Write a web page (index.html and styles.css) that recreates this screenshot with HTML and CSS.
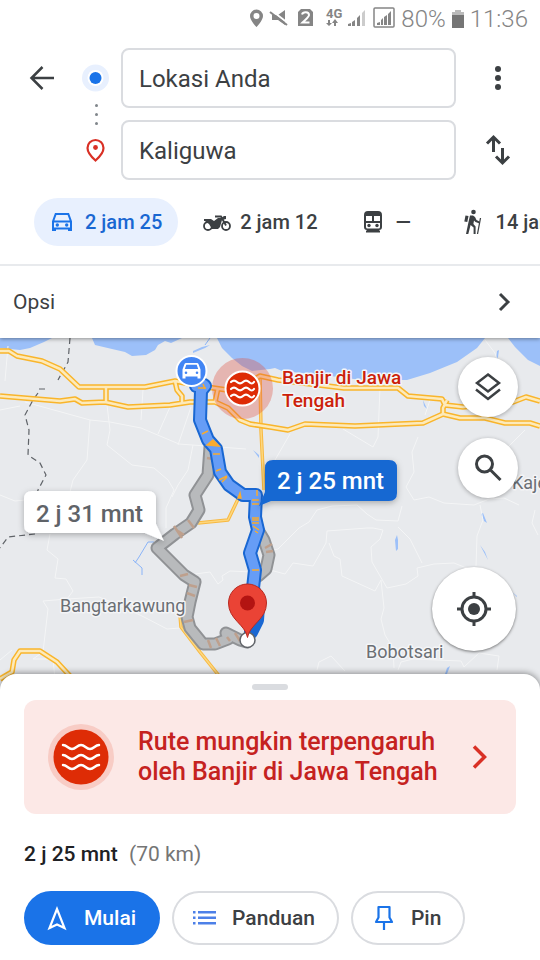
FILE: index.html
```html
<!DOCTYPE html>
<html lang="id">
<head>
<meta charset="utf-8">
<meta name="viewport" content="width=device-width, initial-scale=1">
<title>Rute ke Kaliguwa</title>
<link rel="stylesheet" href="styles.css">
</head>
<body>
<div class="status">
  <svg width="150" height="24" viewBox="247 7 150 24" fill="#858585" aria-hidden="true">
    <path fill-rule="evenodd" d="M257.500 9.500a6.500 6.500 0 0 0-6.500 6.500c0 4.500 6.500 11 6.500 11s6.500-6.500 6.500-11a6.500 6.500 0 0 0-6.500-6.500zm0 3.500a3 3 0 1 1 0 6 3 3 0 0 1 0-6z"/>
    <path d="M273 15h6l7-5v15l-7-5h-6z"/>
    <path d="M272 10l18 14" stroke="#fff" stroke-width="2"/>
    <path d="M271 12l17 13" stroke="#858585" stroke-width="2"/>
    <path d="M302 9h9l3 3v14h-15V12z"/>
    <path d="M303 14.500c1-3 7-3 7 .5 0 2-3 4-6.500 7.500h7" fill="none" stroke="#fff" stroke-width="2"/>
    <text class="net" x="327" y="18">4G</text>
    <path d="M329 20h2v3h2l-3 3-3-3h2zM337 26h-2v-3h-2l3-4 3 4h-2z"/>
    <path d="M349 26v-2l3-1v3zM353 26v-4l3-2v6zM358 26v-8l3-3v11z"/>
    <path d="M363 26V13l3-3v16z" fill="#ccc"/>
    <rect x="375" y="8" width="20" height="19" rx="1" fill="none" stroke="#858585" stroke-width="1.500"/>
    <path d="M378 25v-2l3-1v3zM382 25v-5l2-2v7zM385 25v-8l3-2v10zM389 25V14l3-3v14z"/>
  </svg>
  <span>80%</span>
  <svg width="14" height="20" viewBox="0 0 14 20" aria-hidden="true"><path d="M1 3h3V1h6v2h3v4H1z" fill="#bbb"/><path d="M1 6h12v13H1z" fill="#757575"/></svg>
  <span>11:36</span>
</div>

<header class="directions">
  <form class="route">
    <button class="icon-btn back" type="button" aria-label="Kembali">
      <svg width="28" height="28" viewBox="0 0 28 28" fill="none" stroke="#3c4043" stroke-width="2.500"><path d="M26 14H4M14.500 3L3.500 14l11 11"/></svg>
    </button>
    <svg class="waypoints" width="51" height="132" viewBox="0 0 51 132" aria-hidden="true">
      <circle cx="25.500" cy="30" r="13.500" fill="#e8f0fe"/><circle cx="25.500" cy="30" r="8" fill="#fff"/><circle cx="25.500" cy="30" r="6" fill="#1a73e8"/>
      <g fill="#80868b"><circle cx="26.500" cy="57.500" r="1.500"/><circle cx="26.500" cy="66.500" r="1.500"/><circle cx="26.500" cy="75.500" r="1.500"/></g>
      <path d="M25.500 92a8 8 0 0 0-8 8c0 5.500 8 12.500 8 12.500s8-7 8-12.500a8 8 0 0 0-8-8z" fill="none" stroke="#d93025" stroke-width="2.200"/><circle cx="25.500" cy="99.500" r="2.400" fill="#d93025"/>
    </svg>
    <input class="from" type="text" value="Lokasi Anda" aria-label="Titik awal">
    <button class="icon-btn more" type="button" aria-label="Opsi lainnya">
      <svg width="28" height="28" viewBox="0 0 28 28" fill="#3c4043"><circle cx="14" cy="5" r="3"/><circle cx="14" cy="14" r="3"/><circle cx="14" cy="23" r="3"/></svg>
    </button>
    <input class="to" type="text" value="Kaliguwa" aria-label="Tujuan">
    <button class="icon-btn swap" type="button" aria-label="Tukar titik awal dan tujuan">
      <svg width="30" height="32" viewBox="0 0 30 32" fill="none" stroke="#3c4043" stroke-width="3"><path d="M10.500 18V3.500M4 9.500l6.500-6.500 6.500 6.500M19.500 14v14.500M13 22.500l6.500 6.500 6.500-6.500"/></svg>
    </button>
  </form>
  <nav class="modes" aria-label="Mode perjalanan">
    <button class="mode active" type="button" aria-label="Mobil, 2 jam 25">
      <svg width="28" height="24" viewBox="0 0 28 24" fill="none" stroke="#1a73e8" stroke-width="2"><path d="M5 20.500v-9l2.700-7.500h12.600l2.700 7.500v9M5 11.500h18M5 18.500h18"/><path d="M4 18h4v3H4zM20 18h4v3h-4z" fill="#1a73e8" stroke="none"/><circle cx="9.300" cy="15" r="1.700" fill="#1a73e8" stroke="none"/><circle cx="18.700" cy="15" r="1.700" fill="#1a73e8" stroke="none"/></svg>
      <span>2 jam 25</span>
    </button>
    <button class="mode" type="button" aria-label="Sepeda motor, 2 jam 12">
      <svg width="28" height="24" viewBox="0 0 28 24" fill="none" stroke="#3c4043" stroke-width="1.800"><circle cx="5" cy="16" r="4"/><circle cx="23" cy="16" r="4"/><path d="M12 6.500h6l5 9"/><path d="M1 9h7l3 2 4-3h3l3-2h2v3l-4 1-2 7-2 2h-6l-3-5-4-3H1z" fill="#3c4043" stroke="none"/></svg>
      <span>2 jam 12</span>
    </button>
    <button class="mode" type="button" aria-label="Transportasi umum">
      <svg width="28" height="24" viewBox="0 0 28 24"><path fill="#3c4043" fill-rule="evenodd" d="M9 1h10q4 0 4 4v12q0 3-3 3l1 1v1.500H7V21l1-1q-3 0-3-3V5q0-4 4-4zM7 6v5h6V6zm8 0v5h6V6zM7 13v4q0 1.500 1.500 1.500h11q1.500 0 1.500-1.500v-4z"/><circle cx="10" cy="15.500" r="1.700" fill="#3c4043"/><circle cx="18" cy="15.500" r="1.700" fill="#3c4043"/></svg>
      <span>—</span>
    </button>
    <button class="mode" type="button" aria-label="Jalan kaki, 14 jam">
      <svg width="28" height="26" viewBox="0 0 28 26" fill="#3c4043"><circle cx="14.500" cy="3" r="2.300"/><path d="M11 6.500h3l2 1.500 1.500 3 3 1.500v2l-4-1.500-1.500-1.500-.6 3.500 2.200 2.500v7.500h-2v-6.500l-3-2.500-2.300 9H7L9.500 13z"/><path d="M6.500 6.500l3 .5-1.200 6-3-.6z"/><path d="M21.500 9L18.500 25" stroke="#3c4043" stroke-width="1.300"/></svg>
      <span>14 jam</span>
    </button>
  </nav>
  <button class="options" type="button">
    <span>Opsi</span>
    <svg width="14" height="20" viewBox="0 0 14 20" fill="none" stroke="#3c4043" stroke-width="3"><path d="M3 2l8 8-8 8"/></svg>
  </button>
</header>

<main class="map">
  <svg class="canvas" viewBox="0 338 540 352" preserveAspectRatio="xMidYMin slice" role="img" aria-label="Peta rute">
    <defs>
      <filter id="lift" x="-20%" y="-30%" width="140%" height="180%"><feDropShadow dx="0" dy="2" stdDeviation="3" flood-opacity=".28"/></filter>
      <path id="highways" d="M0 351h9l8 5 25 5 18 8 19 18h66l30-6 25 5 34 5 26-15 18 4 24 3 42 5h54l10 8 34 3 3 6 18 2 50-5 13-5 14 4M0 396l60 5 15-2 7 4 23-1 23 5 42-2 20-3h25l13 6 12 12 10 4 20 3 18 3 17-6 50 2 68-3 20-9 17 4h25l20 5h25l10 3M106 387v15M175 381l2 9 5 6v8M218 388l-3 14M447 400l-4 8v7M0 679l12-7 2-12 6-9h20l17 11 13 14"/>
      <path id="roads" d="M260 376l1 54 3 60M240 495l-12 25-30 3M180 615l1 12 19 25 20 25"/>
      <path id="alternate" d="M210 447l-2 28-13 20 4 15-8 13-16 11-18 14 27 27 11 7-5 20-3 15 3 11 13 16h12l13-5-2-6 14 7 7 2M258 530l6 10 5 15-3 14-8 7"/>
    </defs>
    <rect y="338" width="540" height="352" fill="#e8eaed"/>
    <g fill="#9cc0f9">
      <path d="M0 338h52l-8 4-7 3-7 3-10 2-20-2z"/>
      <path d="M92 338l3 7 17 4 13 3 7 4 14-1 9-5 3-5 7-4 6 2 11-5z"/>
      <path d="M217 338l5 10 10 10 10 8 10 5 18-2 5-1 7 3 40 4 40 5 45 0 23-7 27-11 20-14 8-10z"/>
      <path d="M508 338l7 9 13 13 12 6v-28zM496 360l1-9 2-1-1 7zM193 351l9-4 8-2-5 3-12 5zM423 400l4 9-3-3zM253 450l6 8v-3zM395 540l2-5 1 5v9l-2 2zM481 514l2-1 4 10-3-2zM480 545l5 7 3 8zM512 592l5 4v1zM445 674l2-6 3-2-3 8z"/>
    </g>
    <path d="M135 563l4-6 9-15h6M133 560l9 8v7M205 345l5-7" fill="none" stroke="#8ab4f8" stroke-width="1"/>
    <g fill="none" stroke="#f4f5f6" stroke-width="1">
      <path d="M107 405l3 25-3 15 25 20 22 3 14 12 6 10-8 18v20M8 346l-3 35M0 410l20-4M25 402l65 18 20 2 31 6 38 16 67 5M143 390l-2 30M178 445l13-38M170 407l-12 27M90 420l-3 40-14 20-5 20M0 495l15 6 10-1M193 445l-5 25-10 15-6 12"/>
      <path d="M50 534l-3 16 11 9-3 19 11 1 7 12-6 8-24 2 5 8-5 43-10 7 20 0 2 20M0 660l12-10M67 599l32-2 20 8 25 12 23 12 13-1"/>
      <path d="M195 574l15-2 8 12 5-4-1-4 8-5 23 1M270 551l8-2 9-9 12-12 10-6 8-12 15-4 25-1 10 9 9 6 22 1 4-15M270 570l15 4 8-11 20 3 13-23 1-12 40-3h6l10 2-3 9-9 8 1 15 15 26 19-4 12-8-1-8 17-4 20-1 15 6M329 543l5 13 6 3 2 17 33 15 6-11 3 28-3 11 4 16 8 13 1 20M398 527l12 12 12 24M275 460l15-26M418 437l-6 15 2 20-8 15 8 13 15-3 15 6 30 2 15-6 15-1 15 7M380 387l-2 50-5 10-30-18M440 400l-10 0-5 15M525 430l-25 25M485 340l10 13 6 22M480 505l3 15-6 16-1 30M535 510l-3 13 6 12M317 670l2-8 12-6 14 15M398 670l3-8 12-3 48 2 3 6 15-14 20 3-2 14"/>
    </g>
    <path d="M70 338l-1 12-1 12-10 18M45 389l-6 0M38 393l-5 7-8 15 4 15-1 25 12 8 6 12-8 15-2 8M35 534l-27 3-8 11" fill="none" stroke="#5f6368" stroke-width="1.200" stroke-dasharray="6 4"/>

    <g fill="none" stroke-linejoin="round">
      <use href="#roads" stroke="#f8b940" stroke-width="3.500"/>
      <use href="#roads" stroke="#fdd77f" stroke-width="1.500"/>
      <use href="#highways" stroke="#f9b52b" stroke-width="5.500"/>
      <use href="#highways" stroke="#fdeaba" stroke-width="2.500"/>
    </g>

    <circle cx="242.500" cy="388.500" r="30.500" fill="#e04a36" fill-opacity=".33"/>

    <g fill="none" stroke-linejoin="round" stroke-linecap="round">
      <use href="#alternate" stroke="#909295" stroke-width="13"/>
      <use href="#alternate" stroke="#b8babc" stroke-width="9"/>
      <path d="M174 526l8 12M178 531l6 4M188 520l6 8M180 576l8-2M189 585l8 2M187 593l8 3M184 622l9-2M208 640l3 8M216 638l4 8M227 637l3 4M235 633l5 8M207 458l6 1M265 548l7-4M266 552l7-1" stroke="#bea08d" stroke-width="2.500" stroke-linecap="butt"/>
      <path d="M196 386l8-1 1 1-4 5-1 29 8 20 8 9 4 23 9 13 14 10h13l-1 22 3 13-8 23 5 17-2 18 5 18-1 14-6 12" stroke="#1967d2" stroke-width="14"/>
      <path d="M196 386l8-1 1 1-4 5-1 29 8 20 8 9 4 23 9 13 14 10h13l-1 22 3 13-8 23 5 17-2 18" stroke="#669df6" stroke-width="10"/>
    </g>
    <path d="M198 388h8M203 384l2 5M202 434l6-3M207 445l6-5 6 6zM213 454h7M216 471l5-2M219 480l8-4M222 482l5-5M238 498l2-5 1 5zM252 500h7M252 504h7M257 490v6M252 518h7M252 520h7M252 523h7M253 526l6 4M255 531l3 2M252 570h7" fill="#f9ab2f" stroke="#f9ab2f" stroke-width="1.500"/>

    <g filter="url(#lift)"><path d="M32 491h116q8 0 8 8v25l8 17-19-8H32q-8 0-8-8v-26q0-8 8-8z" fill="#fff"/></g>
    <text class="time" x="36" y="522" fill="#5f6368">2 j 31 mnt</text>
    <g filter="url(#lift)"><path d="M273 460h116q8 0 8 8v25q0 8-8 8H271l-12 5 6-14v-24q0-8 8-8z" fill="#1967d2"/></g>
    <text class="time" x="277" y="489" fill="#fff">2 j 25 mnt</text>

    <circle cx="191.500" cy="371" r="15" fill="#4285f4" stroke="#fff" stroke-width="2"/>
    <path fill="#fff" fill-rule="evenodd" d="M186 363h11q1 0 1.500 1l2 5.500v9h-3v-2h-12v2h-3v-9l2-5.500q.5-1 1.500-1zm.3 1.800l-1.500 4.200h13.400l-1.500-4.200zM186 371.500a1.300 1.300 0 1 0 0 2.600 1.300 1.300 0 0 0 0-2.600zm11 0a1.300 1.300 0 1 0 0 2.600 1.300 1.300 0 0 0 0-2.600z"/>
    <circle cx="242.500" cy="388.500" r="17" fill="#de2c06" stroke="#fff" stroke-width="2"/>
    <path d="M231 382q3-3 6 0t6 0 6 0 5 0M231 389q3-3 6 0t6 0 6 0 5 0M231 396q3-3 6 0t6 0 6 0 5 0" fill="none" stroke="#fff" stroke-width="2.200" stroke-linecap="round"/>

    <circle cx="247.500" cy="640" r="7.500" fill="#fff" stroke="#5f6368" stroke-width="1.500"/>
    <path d="M247.500 637.500c-2-13-19-18-19-34.500a19 19 0 0 1 38 0c0 16.500-17 21.500-19 34.500z" fill="#ea4335" stroke="#b92a20"/>
    <circle cx="247.500" cy="603" r="7.500" fill="#b31412"/>

    <text class="place" x="60" y="612">Bangtarkawung</text>
    <text class="place" x="366" y="658">Bobotsari</text>
    <text class="place" x="512" y="489">Kajen</text>
    <text class="alert-label" x="282" y="384">Banjir di Jawa<tspan x="282" y="407">Tengah</tspan></text>
  </svg>
  <div class="tools">
    <button class="fab" type="button" aria-label="Lapisan peta">
      <svg width="30" height="30" viewBox="0 0 30 30" fill="none" stroke="#3c4043" stroke-width="2.500"><path d="M15 2.500l11 8.500-11 8.500L4 11zM3 17.500l12 9.500 12-9.500"/></svg>
    </button>
    <button class="fab" type="button" aria-label="Telusuri di sepanjang rute">
      <svg width="30" height="30" viewBox="0 0 30 30" fill="none" stroke="#3c4043" stroke-width="3"><circle cx="11.500" cy="11" r="8"/><path d="M17.500 17l10 10"/></svg>
    </button>
  </div>
  <button class="fab locate" type="button" aria-label="Lokasi saya">
    <svg width="34" height="34" viewBox="0 0 34 34" fill="none" stroke="#3c4043" stroke-width="3"><circle cx="17" cy="17" r="12"/><path d="M17 0v5M17 29v5M0 17h5M29 17h5"/><circle cx="17" cy="17" r="6" fill="#3c4043" stroke="none"/></svg>
  </button>
</main>

<section class="sheet">
  <div class="handle"></div>
  <button class="warning" type="button">
    <svg width="66" height="66" viewBox="0 0 66 66" aria-hidden="true"><circle cx="33" cy="33" r="33" fill="#f8ccc5"/><circle cx="33" cy="33" r="27.500" fill="#de2c06"/><path d="M15 21c4 0 5 4 9 4s5-4 9-4 5 4 9 4 5-4 9-4M15 31c4 0 5 4 9 4s5-4 9-4 5 4 9 4 5-4 9-4M15 41c4 0 5 4 9 4s5-4 9-4 5 4 9 4 5-4 9-4" fill="none" stroke="#fff" stroke-width="2.500" stroke-linecap="round"/></svg>
    <span class="warning-text">Rute mungkin terpengaruh oleh Banjir di Jawa Tengah</span>
    <svg width="16" height="26" viewBox="0 0 16 26" fill="none" stroke="#d93025" stroke-width="3.500" aria-hidden="true"><path d="M2 2.500L12.500 13 2 23.500"/></svg>
  </button>
  <p class="summary"><strong>2 j 25 mnt</strong> <span>(70 km)</span></p>
  <div class="actions">
    <button class="action primary" type="button">
      <svg width="24" height="26" viewBox="0 0 24 26" fill="none" stroke="#fff" stroke-width="2.200"><path d="M12 4L4.500 23l7.500-3.500 7.500 3.500z"/></svg>
      Mulai
    </button>
    <button class="action" type="button">
      <svg width="24" height="26" viewBox="0 0 24 26" fill="#4d80e8"><path d="M5 6h18v2.500H5zM5 11.500h18V14H5zM5 17h18v2.500H5zM0 6h2.500v2.500H0zM0 11.500h2.500V14H0zM0 17h2.500v2.500H0z"/></svg>
      Panduan
    </button>
    <button class="action" type="button">
      <svg width="24" height="26" viewBox="0 0 24 26" fill="none" stroke="#1a73e8" stroke-width="2.200"><path d="M6.500 2h11v10.500L20 17H4l2.500-4.500zM12 17v8" stroke-linejoin="round"/></svg>
      Pin
    </button>
  </div>
</section>
</body>
</html>
```
FILE: styles.css
```css
* { box-sizing: border-box; }

body {
  margin: 0;
  min-height: 100vh;
  display: flex;
  flex-direction: column;
  background: #fff;
  color: #3c4043;
  font-family: Roboto, "Liberation Sans", sans-serif;
  overflow-x: hidden;
}

button {
  border: 0;
  padding: 0;
  background: none;
  color: inherit;
  font: inherit;
  cursor: pointer;
}

svg { display: block; flex: none; }

.status {
  display: flex;
  justify-content: flex-end;
  align-items: center;
  gap: 5px;
  height: 38px;
  padding-right: 12px;
  color: #858585;
  font-size: 24px;
  font-weight: 300;
}

.net { font-size: 13px; font-weight: 700; }

.directions {
  position: relative;
  z-index: 1;
  background: #fff;
  box-shadow: 0 1px 4px rgba(0, 0, 0, .4);
  clip-path: inset(0 0 -8px 0);
}

.route {
  display: grid;
  grid-template-columns: 56px 51px minmax(0, 1fr) 84px;
  grid-template-rows: 60px 60px;
  row-gap: 12px;
  padding: 10px 0 0 14px;
}

.icon-btn { display: grid; place-items: center; }
.back { grid-area: 1 / 1; }
.waypoints { grid-area: 1 / 2 / 3 / 3; }
.from { grid-area: 1 / 3; }
.more { grid-area: 1 / 4; }
.to { grid-area: 2 / 3; }
.swap { grid-area: 2 / 4; }

.route input {
  width: 100%;
  padding: 2px 16px 0;
  border: 2px solid #dadce0;
  border-radius: 8px;
  background: #fff;
  color: #3c4043;
  font: 400 24px Roboto, "Liberation Sans", sans-serif;
}

.modes {
  display: flex;
  gap: 11px;
  overflow: hidden;
  padding: 18px 0 18px 34px;
  border-bottom: 2px solid #e8eaed;
}

.mode {
  display: flex;
  flex: none;
  align-items: center;
  gap: 9px;
  height: 48px;
  padding: 0 16px 0 14px;
  border-radius: 24px;
  font-size: 20px;
  font-weight: 500;
  text-align: left;
  white-space: nowrap;
}

.mode span { min-width: 22px; }

.mode.active { background: #e8f0fe; color: #1967d2; }

.options {
  display: flex;
  justify-content: space-between;
  align-items: center;
  width: 100%;
  height: 72px;
  padding: 0 29px 0 13px;
  font-size: 21px;
}

.map {
  position: relative;
  flex: 1;
  min-height: 352px;
  background: #e8eaed;
}

.canvas {
  position: absolute;
  inset: 0;
  width: 100%;
  height: 100%;
}

.time { font-size: 24px; font-weight: 500; }

.place, .alert-label {
  paint-order: stroke;
  stroke: #f4f5f7;
  stroke-width: 3px;
  stroke-linejoin: round;
}

.place { font-size: 18px; fill: #6b6f74; }
.alert-label { font-size: 19px; font-weight: 500; fill: #cc1f0a; }

.tools {
  position: absolute;
  top: 19px;
  right: 22px;
  display: flex;
  flex-direction: column;
  gap: 21px;
}

.fab {
  display: grid;
  place-items: center;
  width: 60px;
  height: 60px;
  border-radius: 50%;
  background: #fff;
  box-shadow: 0 1px 4px rgba(0, 0, 0, .3);
}

.locate {
  position: absolute;
  right: 24px;
  bottom: 39px;
  width: 84px;
  height: 84px;
  box-shadow: 0 1px 3px rgba(0, 0, 0, .5);
}

.sheet {
  position: relative;
  margin-top: -16px;
  padding: 10px 24px 15px;
  border-radius: 16px 16px 0 0;
  background: #fff;
  box-shadow: 0 -1px 6px rgba(0, 0, 0, .4);
}

.handle {
  width: 36px;
  height: 6px;
  margin: 0 auto 10px;
  border-radius: 3px;
  background: #dadce0;
}

.warning {
  display: flex;
  align-items: center;
  gap: 24px;
  width: 100%;
  min-height: 114px;
  padding: 24px 28px 24px 24px;
  border-radius: 12px;
  background: #fce8e6;
  color: #c5221f;
  font-size: 25px;
  font-weight: 500;
  line-height: 30px;
  text-align: left;
}

.warning-text { flex: 1; }

.summary {
  margin: 28px 0 25px;
  font-size: 21px;
  line-height: 24px;
  color: #757575;
}

.summary strong { margin-right: 6px; color: #202124; font-weight: 500; }

.actions { display: flex; gap: 12px; }

.action {
  display: flex;
  align-items: center;
  gap: 15px;
  height: 54px;
  padding: 0 24px 0 21px;
  border-radius: 27px;
  box-shadow: inset 0 0 0 2px #dadce0;
  font-size: 21px;
  font-weight: 500;
}

.primary { background: #1a73e8; color: #fff; box-shadow: none; }
```
